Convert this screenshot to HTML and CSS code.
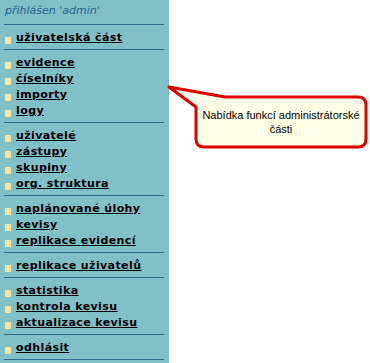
FILE: index.html
```html
<!DOCTYPE html>
<html>
<head>
<meta charset="utf-8">
<link rel="stylesheet" href="styles.css">
</head>
<body>
<nav class="menu">
  <div class="user">přihlášen 'admin'</div>
  <ul class="group">
    <li><a href="#">uživatelská část</a></li>
  </ul>
  <ul class="group">
    <li><a href="#">evidence</a></li>
    <li><a href="#">číselníky</a></li>
    <li><a href="#">importy</a></li>
    <li><a href="#">logy</a></li>
  </ul>
  <ul class="group">
    <li><a href="#">uživatelé</a></li>
    <li><a href="#">zástupy</a></li>
    <li><a href="#">skupiny</a></li>
    <li><a href="#">org. struktura</a></li>
  </ul>
  <ul class="group">
    <li><a href="#">naplánované úlohy</a></li>
    <li><a href="#">kevisy</a></li>
    <li><a href="#">replikace evidencí</a></li>
  </ul>
  <ul class="group">
    <li><a href="#">replikace uživatelů</a></li>
  </ul>
  <ul class="group">
    <li><a href="#">statistika</a></li>
    <li><a href="#">kontrola kevisu</a></li>
    <li><a href="#">aktualizace kevisu</a></li>
  </ul>
  <ul class="group">
    <li><a href="#">odhlásit</a></li>
  </ul>
  <div class="group end"></div>
</nav>
<div class="callout">
  <svg class="bubble" width="205" height="72" viewBox="0 0 205 72">
    <path d="M4 7 L60 17 H193 Q201 17 201 25 V59 Q201 67 193 67 H39 Q31 67 31 59 V27 Z" fill="#ffffe8" stroke="#e00000" stroke-width="3" stroke-linejoin="round"/>
  </svg>
  <div class="callout-text">Nabídka funkcí administrátorské části</div>
</div>
</body>
</html>
```

FILE: styles.css
```css
html, body {
  margin: 0;
  padding: 0;
  background: #ffffff;
  height: 100%;
  overflow: hidden;
}
body {
  position: relative;
}
.menu {
  width: 169px;
  height: 363px;
  background: #80c0c7;
  font-family: "DejaVu Sans", Verdana, sans-serif;
  display: flex;
  flex-direction: column;
}
.user {
  height: 24px;
  padding-left: 5px;
  box-sizing: border-box;
  padding-top: 4px;
  font-size: 11px;
  font-style: italic;
  color: #25628a;
  line-height: 14px;
}
.group {
  list-style: none;
  margin: 0 5px 0 4px;
  padding: 5px 0 3px 0;
  border-top: 1px solid #2e6f90;
}
.group.end {
  padding: 0;
}
.group li {
  height: 16px;
  display: flex;
  align-items: center;
  padding-left: 1px;
}
.group li::before {
  content: "";
  width: 6px;
  height: 7px;
  background: #f8e2a0;
  margin-right: 5px;
  margin-top: 5px;
}
.group a {
  font-size: 11px;
  font-weight: bold;
  letter-spacing: 0.4px;
  color: #000000;
  text-decoration: underline;
  line-height: 16px;
}
.callout {
  position: absolute;
  left: 165px;
  top: 80px;
  width: 205px;
  height: 72px;
}
.bubble {
  display: block;
}
.callout-text {
  position: absolute;
  left: 33px;
  top: 19px;
  width: 166px;
  height: 46px;
  display: flex;
  align-items: center;
  justify-content: center;
  text-align: center;
  font-family: "Liberation Sans", Arial, sans-serif;
  font-size: 11px;
  line-height: 14px;
  color: #000000;
}
```
